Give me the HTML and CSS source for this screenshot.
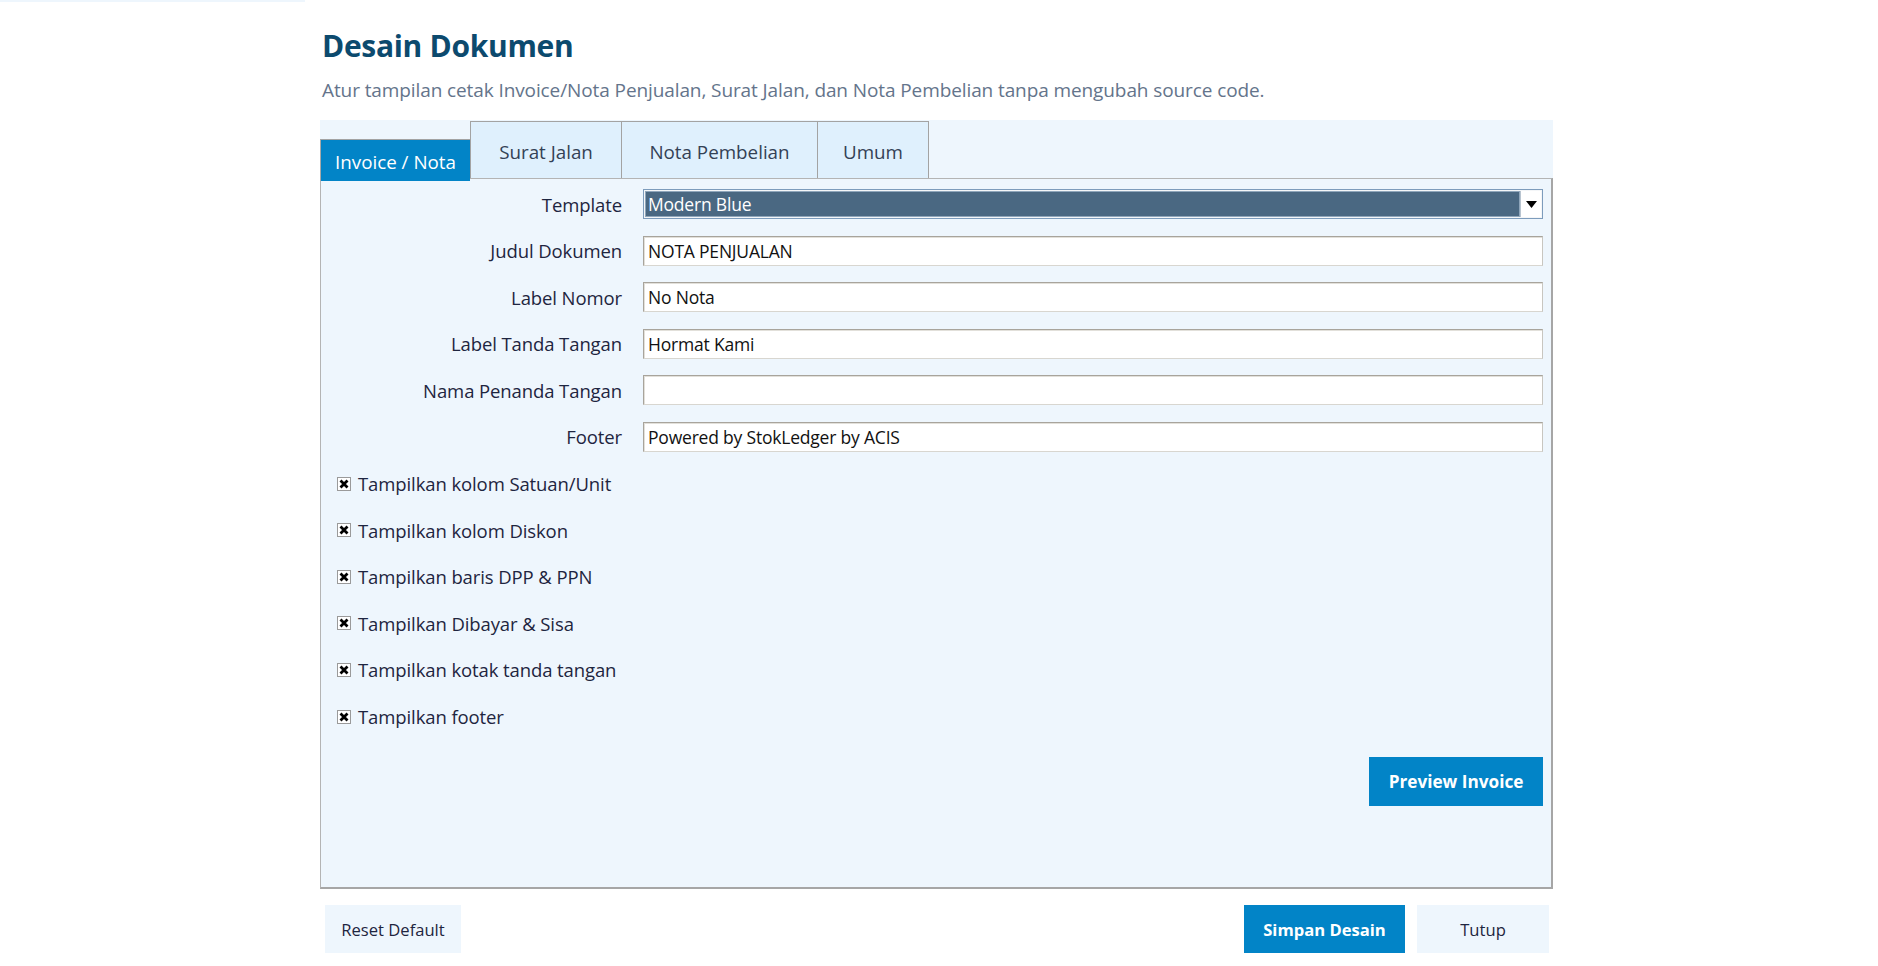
FILE: index.html
```html
<!DOCTYPE html>
<html lang="id">
<head>
<meta charset="utf-8">
<title>Desain Dokumen</title>
<link rel="stylesheet" href="styles.css">
</head>
<body>
<div class="topstrip"></div>
<div class="page">
  <h1 class="title">Desain Dokumen</h1>
  <p class="subtitle">Atur tampilan cetak Invoice/Nota Penjualan, Surat Jalan, dan Nota Pembelian tanpa mengubah source code.</p>

  <div class="tabs">
    <div class="tab active">Invoice / Nota</div>
    <div class="tab tab-surat">Surat Jalan</div>
    <div class="tab tab-nota">Nota Pembelian</div>
    <div class="tab tab-umum">Umum</div>
  </div>

  <div class="panel">
    <div class="rows">
      <div class="field">
        <span class="lbl">Template</span>
        <div class="select">
          <span class="select-value">Modern Blue</span>
          <span class="select-arrow"><svg width="11" height="7" viewBox="0 0 11 7"><path d="M0 0h11L5.5 7z" fill="#000"/></svg></span>
        </div>
      </div>
      <div class="field">
        <span class="lbl">Judul Dokumen</span>
        <div class="input">NOTA PENJUALAN</div>
      </div>
      <div class="field">
        <span class="lbl">Label Nomor</span>
        <div class="input">No Nota</div>
      </div>
      <div class="field">
        <span class="lbl">Label Tanda Tangan</span>
        <div class="input">Hormat Kami</div>
      </div>
      <div class="field">
        <span class="lbl">Nama Penanda Tangan</span>
        <div class="input"></div>
      </div>
      <div class="field">
        <span class="lbl">Footer</span>
        <div class="input">Powered by StokLedger by ACIS</div>
      </div>

      <div class="check"><span class="box"><svg width="10" height="10" viewBox="0 0 10 10"><path d="M1.5 1.5l7 7M8.5 1.5l-7 7" stroke="#000" stroke-width="2.8"/></svg></span><span class="check-text">Tampilkan kolom Satuan/Unit</span></div>
      <div class="check"><span class="box"><svg width="10" height="10" viewBox="0 0 10 10"><path d="M1.5 1.5l7 7M8.5 1.5l-7 7" stroke="#000" stroke-width="2.8"/></svg></span><span class="check-text">Tampilkan kolom Diskon</span></div>
      <div class="check"><span class="box"><svg width="10" height="10" viewBox="0 0 10 10"><path d="M1.5 1.5l7 7M8.5 1.5l-7 7" stroke="#000" stroke-width="2.8"/></svg></span><span class="check-text">Tampilkan baris DPP &amp; PPN</span></div>
      <div class="check"><span class="box"><svg width="10" height="10" viewBox="0 0 10 10"><path d="M1.5 1.5l7 7M8.5 1.5l-7 7" stroke="#000" stroke-width="2.8"/></svg></span><span class="check-text">Tampilkan Dibayar &amp; Sisa</span></div>
      <div class="check"><span class="box"><svg width="10" height="10" viewBox="0 0 10 10"><path d="M1.5 1.5l7 7M8.5 1.5l-7 7" stroke="#000" stroke-width="2.8"/></svg></span><span class="check-text">Tampilkan kotak tanda tangan</span></div>
      <div class="check"><span class="box"><svg width="10" height="10" viewBox="0 0 10 10"><path d="M1.5 1.5l7 7M8.5 1.5l-7 7" stroke="#000" stroke-width="2.8"/></svg></span><span class="check-text">Tampilkan footer</span></div>
    </div>
    <div class="panel-actions">
      <button class="btn primary btn-preview">Preview Invoice</button>
    </div>
  </div>

  <div class="bottom-bar">
    <button class="btn light btn-reset">Reset Default</button>
    <div class="spacer"></div>
    <button class="btn primary btn-save">Simpan Desain</button>
    <button class="btn light btn-close">Tutup</button>
  </div>
</div>
</body>
</html>
```

FILE: styles.css
```css
html, body {
  margin: 0;
  padding: 0;
  background: #ffffff;
}

body {
  font-family: "Open Sans", "Noto Sans", sans-serif;
  color: #1f2937;
}

.topstrip {
  width: 305px;
  height: 2px;
  background: #eef6fd;
}

.page {
  width: 1233px;
  margin-left: 320px;
}

.title {
  margin: 25px 0 0 0;
  padding-left: 2px;
  font-size: 30px;
  line-height: 38px;
  font-weight: 700;
  color: #0c4a6e;
  letter-spacing: -0.3px;
}

.subtitle {
  margin: 12px 0 0 0;
  padding-left: 2px;
  font-size: 19px;
  line-height: 26px;
  color: #64748b;
  letter-spacing: -0.1px;
}

.tabs {
  margin-top: 17px;
  height: 58px;
  background: #eef6fd;
  display: flex;
  align-items: flex-end;
  position: relative;
  z-index: 2;
}

.tab {
  box-sizing: border-box;
  height: 57px;
  display: flex;
  align-items: center;
  justify-content: center;
  font-size: 18.8px;
  color: #334155;
  background: #dff0fd;
  border: 1px solid #a3a3a3;
  border-bottom: none;
  border-left: none;
  padding-top: 3px;
}

.tab.active {
  height: 42px;
  margin-bottom: -3px;
  width: 150px;
  background: #0284c7;
  color: #ffffff;
  border-left: 1px solid #a9a9a9;
  border-right: none;
  padding-top: 2px;
}

.tab-surat { width: 152px; border-left: 1px solid #a3a3a3; }
.tab-nota { width: 196px; }
.tab-umum { width: 111px; }

.panel {
  box-sizing: border-box;
  height: 711px;
  background: #eef6fd;
  border: 1px solid #b4b4b4;
  border-right: 2px solid #a6a6a6;
  border-bottom: 2px solid #a6a6a6;
  padding: 10px 8px 0 0;
  display: flex;
  flex-direction: column;
}

.rows {
  display: flex;
  flex-direction: column;
  gap: 16.6px;
}

.field {
  display: grid;
  grid-template-columns: 301px 1fr;
  column-gap: 21px;
  align-items: center;
  height: 30px;
}

.lbl {
  text-align: right;
  font-size: 18.5px;
  color: #1e2540;
  letter-spacing: -0.1px;
}

.input {
  box-sizing: border-box;
  height: 30px;
  background: #ffffff;
  border: 1px solid #a8a49c;
  border-bottom-color: #d8d6d0;
  border-right-color: #c8c6c0;
  box-shadow: inset 1px 1px 0 #e2e0da;
  padding: 0 4px;
  display: flex;
  align-items: center;
  font-size: 17.5px;
  color: #111111;
  letter-spacing: -0.2px;
}

.select {
  box-sizing: border-box;
  height: 30px;
  border: 1px solid #7d9cbc;
  background: #f4f6f8;
  display: flex;
  padding: 1px;
}

.select-value {
  flex: 1;
  background: #4a6882;
  border: 1px solid #8fa6bb;
  color: #ffffff;
  font-size: 17.5px;
  letter-spacing: -0.2px;
  display: flex;
  align-items: center;
  padding-left: 2px;
}

.select-arrow {
  width: 20px;
  display: flex;
  align-items: center;
  justify-content: center;
  background: #ffffff;
  border-left: 1px solid #b8c4d0;
}

.check {
  height: 30px;
  display: flex;
  align-items: center;
  padding-left: 16px;
  gap: 7px;
}

.box {
  box-sizing: border-box;
  width: 14px;
  height: 14px;
  background: #ffffff;
  border: 1px solid #9a9a9a;
  display: flex;
  align-items: center;
  justify-content: center;
}

.box svg {
  display: block;
}

.check-text {
  font-size: 18.5px;
  color: #1e2540;
  letter-spacing: -0.1px;
}

.panel-actions {
  display: flex;
  justify-content: flex-end;
  margin-top: 25px;
}

.btn {
  box-sizing: border-box;
  height: 48px;
  border: none;
  font-family: "Open Sans", "Noto Sans", sans-serif;
  font-size: 16.6px;
  padding: 0;
  cursor: pointer;
}

.btn.primary {
  background: #0284c7;
  color: #ffffff;
  font-weight: 700;
}

.btn.light {
  background: #eef6fd;
  color: #1e2540;
}

.btn-preview { width: 174px; height: 49px; font-size: 17.2px; }

.bottom-bar {
  margin-top: 16px;
  display: flex;
  align-items: center;
  padding: 0 4px 0 5px;
}

.spacer { flex: 1; }

.btn-reset { width: 136px; }
.btn-save { width: 161px; margin-right: 12px; }
.btn-close { width: 132px; }
```
